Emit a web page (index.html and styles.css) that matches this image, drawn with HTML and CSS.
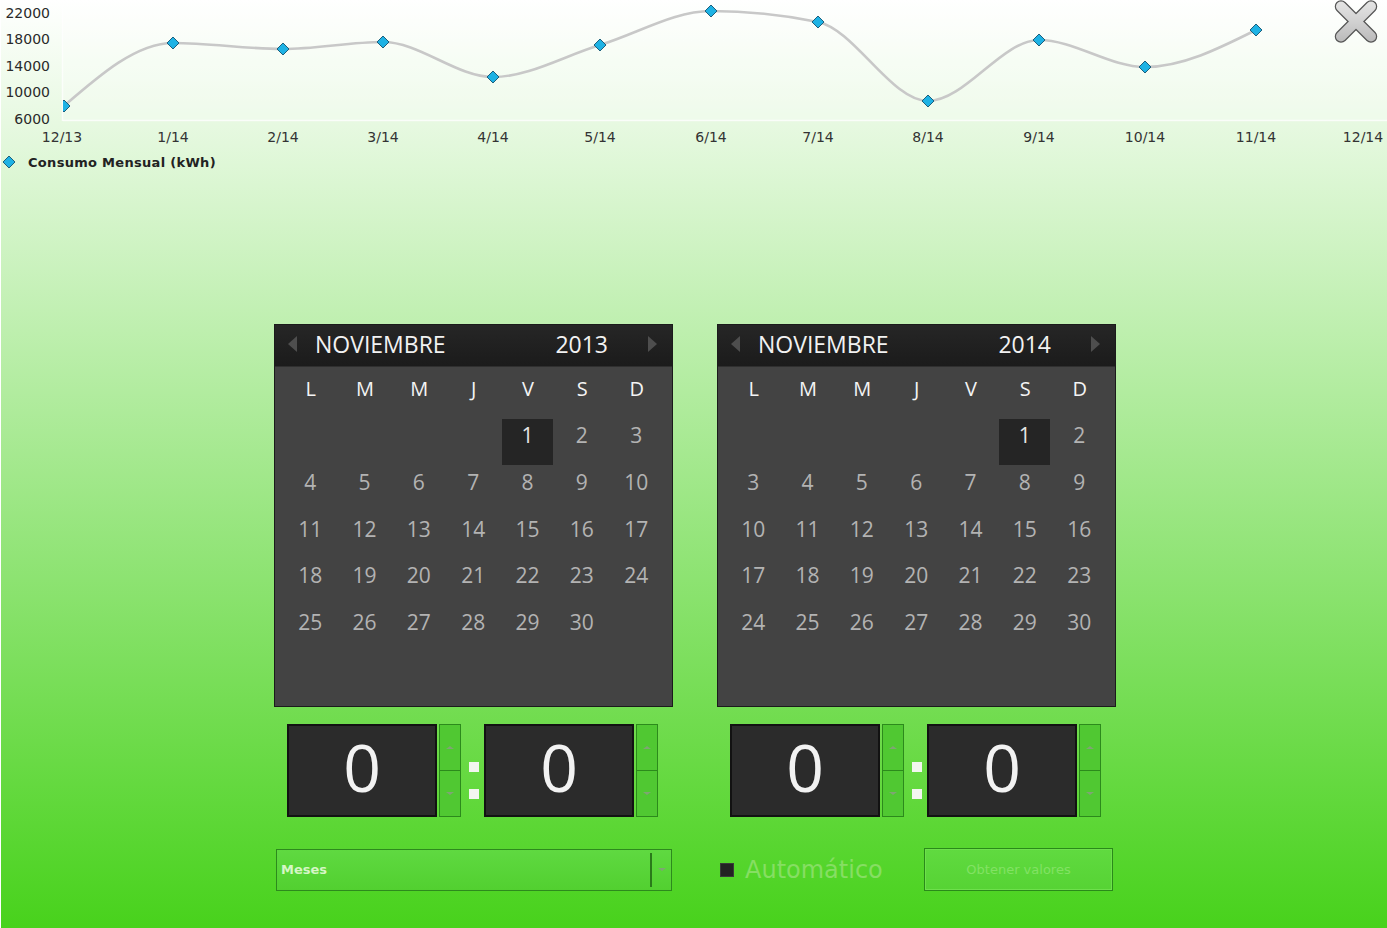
FILE: index.html
```html
<!DOCTYPE html>
<html lang="es">
<head>
<meta charset="utf-8">
<title>Consumo Mensual</title>
<link rel="stylesheet" href="styles.css">
</head>
<body>
<div class="screen">

  <section class="chart-area">
    <svg class="chart" width="1386" height="150" viewBox="1 0 1386 150">
      <defs>
        <clipPath id="plot-clip"><rect x="63" y="-10" width="1330" height="140"/></clipPath>
      </defs>
      <rect class="plot-bg" x="63" y="0" width="1324" height="120"/>
      <line class="plot-edge" x1="62.5" y1="0" x2="62.5" y2="121"/>
      <line class="plot-edge" x1="63" y1="120.5" x2="1387" y2="120.5"/>

      <g class="y-labels">
        <text x="50" y="13">22000</text>
        <text x="50" y="39">18000</text>
        <text x="50" y="66">14000</text>
        <text x="50" y="92">10000</text>
        <text x="50" y="119">6000</text>
      </g>

      <g class="x-labels">
        <text x="62" y="137">12/13</text>
        <text x="173" y="137">1/14</text>
        <text x="283" y="137">2/14</text>
        <text x="383" y="137">3/14</text>
        <text x="493" y="137">4/14</text>
        <text x="600" y="137">5/14</text>
        <text x="711" y="137">6/14</text>
        <text x="818" y="137">7/14</text>
        <text x="928" y="137">8/14</text>
        <text x="1039" y="137">9/14</text>
        <text x="1145" y="137">10/14</text>
        <text x="1256" y="137">11/14</text>
        <text x="1363" y="137">12/14</text>
      </g>

      <g clip-path="url(#plot-clip)">
        <path class="series" d="M64,106 C100.3,74.5 136.7,43 173,43 C209.7,43 246.3,49 283,49 C316.3,49 349.7,42 383,42 C419.7,42 456.3,77 493,77 C528.7,77 564.3,55.8 600,45 C637,33.8 674,11 711,11 C746.7,11 782.3,14.7 818,22 C854.7,29.6 891.3,101 928,101 C965,101 1002,40 1039,40 C1074.3,40 1109.7,67 1145,67 C1182,67 1219,48.5 1256,30"/>
        <g class="markers">
          <path d="M64,100 l6,6 l-6,6 l-6,-6z"/>
          <path d="M173,37 l6,6 l-6,6 l-6,-6z"/>
          <path d="M283,43 l6,6 l-6,6 l-6,-6z"/>
          <path d="M383,36 l6,6 l-6,6 l-6,-6z"/>
          <path d="M493,71 l6,6 l-6,6 l-6,-6z"/>
          <path d="M600,39 l6,6 l-6,6 l-6,-6z"/>
          <path d="M711,5 l6,6 l-6,6 l-6,-6z"/>
          <path d="M818,16 l6,6 l-6,6 l-6,-6z"/>
          <path d="M928,95 l6,6 l-6,6 l-6,-6z"/>
          <path d="M1039,34 l6,6 l-6,6 l-6,-6z"/>
          <path d="M1145,61 l6,6 l-6,6 l-6,-6z"/>
          <path d="M1256,24 l6,6 l-6,6 l-6,-6z"/>
        </g>
      </g>
    </svg>

    <div class="legend">
      <svg class="legend-mark" width="14" height="14" viewBox="0 0 14 14">
        <path d="M7,1 l6,6 l-6,6 l-6,-6z"/>
      </svg>
      <span class="legend-text">Consumo Mensual (kWh)</span>
    </div>

    <button class="close-btn" type="button" aria-label="Cerrar">
      <svg width="50" height="45" viewBox="0 0 50 45">
        <defs>
          <linearGradient id="x-fill" x1="0" y1="0" x2="0" y2="45" gradientUnits="userSpaceOnUse">
            <stop offset="0" stop-color="#e6e6e6"/>
            <stop offset="0.5" stop-color="#d0d0d0"/>
            <stop offset="1" stop-color="#b6b6b6"/>
          </linearGradient>
        </defs>
        <g stroke-linecap="round">
          <line x1="10" y1="6.5" x2="40" y2="36.5" stroke="#555555" stroke-width="12.5"/>
          <line x1="40" y1="6.5" x2="10" y2="36.5" stroke="#555555" stroke-width="12.5"/>
          <line x1="10" y1="6.5" x2="40" y2="36.5" stroke="url(#x-fill)" stroke-width="10"/>
          <line x1="40" y1="6.5" x2="10" y2="36.5" stroke="url(#x-fill)" stroke-width="10"/>
        </g>
      </svg>
    </button>
  </section>

  <section class="pickers">

    <!-- start of range -->
    <div class="column">
      <div class="calendar">
        <div class="cal-head">
          <span class="nav prev"></span>
          <span class="month">NOVIEMBRE</span>
          <span class="year">2013</span>
          <span class="nav next"></span>
        </div>
        <div class="cal-grid">
          <span class="dow">L</span><span class="dow">M</span><span class="dow">M</span><span class="dow">J</span><span class="dow">V</span><span class="dow">S</span><span class="dow">D</span>
          <span class="day"></span><span class="day"></span><span class="day"></span><span class="day"></span><span class="day sel">1</span><span class="day">2</span><span class="day">3</span>
          <span class="day">4</span><span class="day">5</span><span class="day">6</span><span class="day">7</span><span class="day">8</span><span class="day">9</span><span class="day">10</span>
          <span class="day">11</span><span class="day">12</span><span class="day">13</span><span class="day">14</span><span class="day">15</span><span class="day">16</span><span class="day">17</span>
          <span class="day">18</span><span class="day">19</span><span class="day">20</span><span class="day">21</span><span class="day">22</span><span class="day">23</span><span class="day">24</span>
          <span class="day">25</span><span class="day">26</span><span class="day">27</span><span class="day">28</span><span class="day">29</span><span class="day">30</span><span class="day"></span>
        </div>
      </div>

      <div class="clock">
        <div class="digit">0</div>
        <div class="spin"><span><i class="up"></i></span><span><i class="down"></i></span></div>
        <div class="colon"><i></i><i></i></div>
        <div class="digit">0</div>
        <div class="spin"><span><i class="up"></i></span><span><i class="down"></i></span></div>
      </div>

      <div class="controls">
        <div class="select">
          <span class="select-label">Meses</span>
          <span class="select-btn"><i class="down"></i></span>
        </div>
      </div>
    </div>

    <!-- end of range -->
    <div class="column">
      <div class="calendar">
        <div class="cal-head">
          <span class="nav prev"></span>
          <span class="month">NOVIEMBRE</span>
          <span class="year">2014</span>
          <span class="nav next"></span>
        </div>
        <div class="cal-grid">
          <span class="dow">L</span><span class="dow">M</span><span class="dow">M</span><span class="dow">J</span><span class="dow">V</span><span class="dow">S</span><span class="dow">D</span>
          <span class="day"></span><span class="day"></span><span class="day"></span><span class="day"></span><span class="day"></span><span class="day sel">1</span><span class="day">2</span>
          <span class="day">3</span><span class="day">4</span><span class="day">5</span><span class="day">6</span><span class="day">7</span><span class="day">8</span><span class="day">9</span>
          <span class="day">10</span><span class="day">11</span><span class="day">12</span><span class="day">13</span><span class="day">14</span><span class="day">15</span><span class="day">16</span>
          <span class="day">17</span><span class="day">18</span><span class="day">19</span><span class="day">20</span><span class="day">21</span><span class="day">22</span><span class="day">23</span>
          <span class="day">24</span><span class="day">25</span><span class="day">26</span><span class="day">27</span><span class="day">28</span><span class="day">29</span><span class="day">30</span>
        </div>
      </div>

      <div class="clock">
        <div class="digit">0</div>
        <div class="spin"><span><i class="up"></i></span><span><i class="down"></i></span></div>
        <div class="colon"><i></i><i></i></div>
        <div class="digit">0</div>
        <div class="spin"><span><i class="up"></i></span><span><i class="down"></i></span></div>
      </div>

      <div class="controls">
        <span class="check"></span>
        <span class="check-label">Automático</span>
        <button class="fetch" type="button">Obtener valores</button>
      </div>
    </div>

  </section>
</div>
</body>
</html>
```

FILE: styles.css
```css
* {
  box-sizing: border-box;
  margin: 0;
  padding: 0;
}

html,
body {
  width: 1387px;
  height: 928px;
  overflow: hidden;
}

body {
  background: #48d21c;
  font-family: "DejaVu Sans", Verdana, sans-serif;
}

.screen {
  position: relative;
  width: 1387px;
  height: 928px;
  border-left: 1px solid #ffffff;
  background: linear-gradient(to bottom, #ffffff 0%, #48d21c 100%);
}

/* ---------- chart ---------- */

.chart-area {
  height: 174px;
}

.chart {
  display: block;
}

.plot-bg {
  fill: rgba(255, 255, 255, 0.3);
}

.plot-edge {
  stroke: #ffffff;
  stroke-width: 1.5;
  opacity: 0.8;
}

.y-labels text {
  font-family: "DejaVu Sans", Verdana, sans-serif;
  font-size: 14px;
  fill: #2a2a2a;
  text-anchor: end;
  dominant-baseline: central;
}

.x-labels text {
  font-family: "DejaVu Sans", Verdana, sans-serif;
  font-size: 14px;
  fill: #333333;
  text-anchor: middle;
  dominant-baseline: central;
}

.series {
  fill: none;
  stroke: #c8c8c8;
  stroke-width: 2.6;
}

.markers path,
.legend-mark path {
  fill: #1eb2e4;
  stroke: #1d5f7c;
  stroke-width: 1;
}

.legend {
  display: flex;
  align-items: center;
  gap: 12px;
  height: 24px;
  padding-left: 1px;
}

.legend-mark {
  display: block;
}

.legend-text {
  font-weight: bold;
  font-size: 13px;
  letter-spacing: 0.3px;
  color: #222222;
}

.close-btn {
  position: absolute;
  top: 0;
  left: 1330px;
  border: 0;
  background: none;
  line-height: 0;
}

/* ---------- date pickers ---------- */

.pickers {
  display: flex;
  gap: 44px;
  padding-left: 273px;
  margin-top: 150px;
}

.column {
  width: 399px;
  display: flex;
  flex-direction: column;
}

.calendar {
  height: 383px;
  border: 1px solid #1b1b1b;
  background: #434343;
  font-family: "Open Sans", "Noto Sans", sans-serif;
}

.cal-head {
  height: 42px;
  display: flex;
  align-items: center;
  padding: 0 15px 3px 13px;
  background: linear-gradient(to bottom, #262626, #1b1b1b);
  border-bottom: 1px solid #2f2f2f;
  color: #f2f2f2;
  font-size: 23px;
}

.nav {
  width: 0;
  height: 0;
  border-top: 8px solid transparent;
  border-bottom: 8px solid transparent;
}

.nav.prev {
  border-right: 9px solid #4e4e4e;
}

.nav.next {
  border-left: 9px solid #4e4e4e;
}

.month {
  flex: 1;
  margin-left: 18px;
}

.year {
  margin-right: 40px;
}

.cal-grid {
  display: grid;
  grid-template-columns: repeat(7, 54.33px);
  grid-auto-rows: 46.75px;
  grid-template-rows: 52px;
  padding: 0 0 0 8.5px;
}

.dow {
  line-height: 44px;
  text-align: center;
  font-size: 20px;
  color: #f4f4f4;
}

.day {
  height: 46px;
  margin: 0 2px 0 1px;
  line-height: 33px;
  text-align: center;
  font-size: 21px;
  color: #b3b3b3;
}

.day.sel {
  background: #252525;
  color: #e6e6e6;
}

/* ---------- time spinners ---------- */

.clock {
  display: flex;
  height: 93px;
  margin-top: 17px;
  padding-left: 13px;
}

.digit {
  width: 150px;
  height: 93px;
  display: flex;
  align-items: center;
  justify-content: center;
  padding-bottom: 10px;
  background: #2b2b2b;
  border: 2px solid #121212;
  color: #f2f2f2;
  font-family: "Open Sans", "Noto Sans", sans-serif;
  font-size: 66px;
}

.spin {
  width: 22px;
  margin-left: 2px;
  display: flex;
  flex-direction: column;
}

.spin span {
  flex: 1;
  display: flex;
  align-items: center;
  justify-content: center;
  border: 1px solid #2c8a1c;
  background: #50c832;
}

.spin span:first-child {
  border-bottom: 0;
}

.up {
  width: 0;
  height: 0;
  border-left: 4px solid transparent;
  border-right: 4px solid transparent;
  border-bottom: 3px solid #7ea673;
}

.down {
  width: 0;
  height: 0;
  border-left: 4px solid transparent;
  border-right: 4px solid transparent;
  border-top: 3px solid #7ea673;
}

.colon {
  width: 10px;
  margin: 0 5px 0 8px;
  padding-top: 38px;
  display: flex;
  flex-direction: column;
  gap: 17px;
}

.colon i {
  display: block;
  width: 10px;
  height: 10px;
  background: #f3f6f0;
}

/* ---------- bottom controls ---------- */

.controls {
  display: flex;
  align-items: center;
  height: 43px;
  margin-top: 31px;
}

.select {
  width: 396px;
  height: 42px;
  margin-left: 2px;
  display: flex;
  align-items: center;
  border: 1px solid #2d8a1d;
  background: linear-gradient(to bottom, #5fd941, #52d030);
}

.select-label {
  flex: 1;
  padding-left: 4px;
  font-weight: bold;
  font-size: 13px;
  color: #d6f6c6;
}

.select-btn {
  width: 21px;
  align-self: stretch;
  margin: 3px 0;
  display: flex;
  align-items: center;
  justify-content: center;
  border-left: 2px solid #2a7a1a;
}

.check {
  width: 14px;
  height: 14px;
  margin-left: 3px;
  background: #232323;
  border: 1px solid #3a3a3a;
}

.check-label {
  margin-left: 11px;
  font-size: 24px;
  color: #86de63;
}

.fetch {
  width: 189px;
  height: 43px;
  margin-left: auto;
  margin-right: 3px;
  border: 1px solid #2a8a1a;
  box-shadow: inset 0 0 0 1px #6ee04c;
  background: linear-gradient(to bottom, #60da40, #56d334);
  font-family: "DejaVu Sans", Verdana, sans-serif;
  font-size: 13px;
  color: #82e264;
}
```
